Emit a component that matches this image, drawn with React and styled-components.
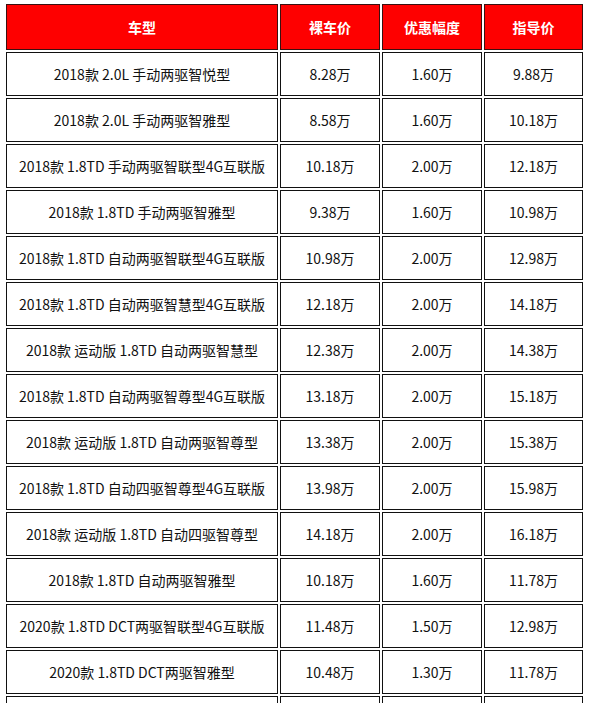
import styled, { createGlobalStyle } from "styled-components";

const GlobalStyle = createGlobalStyle`
  body {
    margin: 0;
    background: #fff;
    font-family: "Noto Sans CJK SC", "Noto Sans", sans-serif;
  }
`;

const Page = styled.div`
  padding: 4px;
`;

const Table = styled.table`
  width: 581px;
  table-layout: fixed;
  border-collapse: separate;
  border-spacing: 2px;
  margin-top: -2px;
`;

const Col = styled.col`
  width: ${(p) => p.$w}px;
`;

const HeadCell = styled.th`
  height: 46px;
  padding: 0;
  box-sizing: border-box;
  background: #fe0000;
  border: 1px solid #3a1010;
  color: #fff;
  font-size: 14px;
  font-weight: 700;
  text-align: center;
  vertical-align: middle;
`;

const Cell = styled.td`
  height: 44px;
  padding: 0;
  box-sizing: border-box;
  border: 1px solid #111;
  color: #111;
  font-size: 14px;
  text-align: center;
  vertical-align: middle;
  white-space: pre;
`;

const rows = [
  ["2018款 2.0L 手动两驱智悦型", "8.28万", "1.60万", "9.88万"],
  ["2018款 2.0L 手动两驱智雅型", "8.58万", "1.60万", "10.18万"],
  ["2018款 1.8TD 手动两驱智联型4G互联版", "10.18万", "2.00万", "12.18万"],
  ["2018款 1.8TD 手动两驱智雅型", "9.38万", "1.60万", "10.98万"],
  ["2018款 1.8TD 自动两驱智联型4G互联版", "10.98万", "2.00万", "12.98万"],
  ["2018款 1.8TD 自动两驱智慧型4G互联版", "12.18万", "2.00万", "14.18万"],
  ["2018款 运动版 1.8TD 自动两驱智慧型", "12.38万", "2.00万", "14.38万"],
  ["2018款 1.8TD 自动两驱智尊型4G互联版", "13.18万", "2.00万", "15.18万"],
  ["2018款 运动版 1.8TD 自动两驱智尊型", "13.38万", "2.00万", "15.38万"],
  ["2018款 1.8TD 自动四驱智尊型4G互联版", "13.98万", "2.00万", "15.98万"],
  ["2018款 运动版 1.8TD 自动四驱智尊型", "14.18万", "2.00万", "16.18万"],
  ["2018款 1.8TD 自动两驱智雅型", "10.18万", "1.60万", "11.78万"],
  ["2020款 1.8TD DCT两驱智联型4G互联版", "11.48万", "1.50万", "12.98万"],
  ["2020款 1.8TD DCT两驱智雅型", "10.48万", "1.30万", "11.78万"],
  ["", "", "", ""],
];

const widths = [272, 100, 100, 99];
const heads = ["车型", "裸车价", "优惠幅度", "指导价"];

export default function App() {
  return (
    <>
      <GlobalStyle />
      <Page>
        <Table>
          <colgroup>
            {widths.map((w, i) => (
              <Col key={i} $w={w} />
            ))}
          </colgroup>
          <thead>
            <tr>
              {heads.map((h) => (
                <HeadCell key={h}>{h}</HeadCell>
              ))}
            </tr>
          </thead>
          <tbody>
            {rows.map((r, i) => (
              <tr key={i}>
                {r.map((c, j) => (
                  <Cell key={j}>{c}</Cell>
                ))}
              </tr>
            ))}
          </tbody>
        </Table>
      </Page>
    </>
  );
}
